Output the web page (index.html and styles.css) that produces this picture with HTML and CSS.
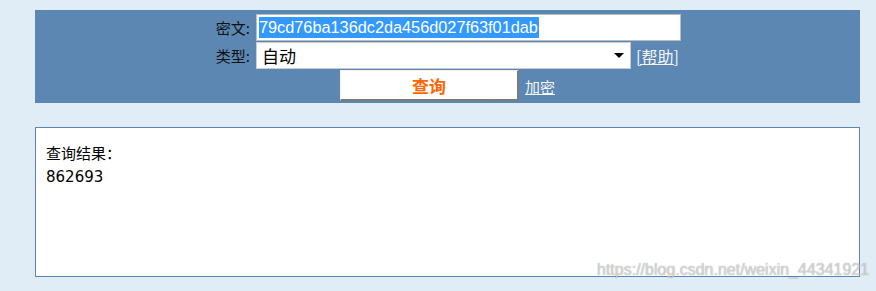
FILE: index.html
```html
<!DOCTYPE html>
<html lang="zh">
<head>
<meta charset="utf-8">
<title>MD5 查询</title>
<link rel="stylesheet" href="styles.css">
</head>
<body>
<div class="page">
  <form class="bar">
    <label class="lbl">密文:</label>
    <div class="field">
      <div class="text-input"><span class="sel">79cd76ba136dc2da456d027f63f01dab</span></div>
    </div>
    <label class="lbl">类型:</label>
    <div class="field row">
      <div class="select"><span>自动</span><i class="caret"></i></div>
      <a class="link help" href="#">[帮助]</a>
    </div>
    <div></div>
    <div class="field row">
      <button type="button" class="btn">查询</button>
      <a class="link enc" href="#">加密</a>
    </div>
  </form>
  <div class="result">
    <div class="r-title">查询结果：</div>
    <div class="r-value">862693</div>
  </div>
</div>
<div class="watermark">https://blog.csdn.net/weixin_44341921</div>
</body>
</html>
```
FILE: styles.css
```css
html, body {
  margin: 0;
  padding: 0;
  background: #e1edf6;
  font-family: "Noto Sans CJK SC", "DejaVu Sans", sans-serif;
  height: 100%;
}
.page {
  margin: 10px 0 0 35px;
  width: 825px;
}
.bar {
  background: #5b87b2;
  margin: 0;
  padding: 4px 0 2px 0;
  display: grid;
  grid-template-columns: 215px 1fr;
  column-gap: 6px;
  row-gap: 1px;
  align-items: center;
}
.lbl {
  text-align: right;
  font-size: 15px;
  color: #111;
  line-height: 27px;
}
.field.row {
  display: flex;
  align-items: center;
}
.text-input {
  width: 421px;
  height: 25px;
  background: #fff;
  border: 1px solid #b8bcc4;
  display: flex;
  align-items: center;
  padding-left: 2px;
  box-sizing: content-box;
}
.sel {
  background: #3399ff;
  color: #fff;
  font-family: "Liberation Sans", Arial, sans-serif;
  font-size: 16.3px;
  line-height: 21px;
  height: 21px;
  display: inline-block;
  padding: 0 1px 0 0;
}
.select {
  width: 373px;
  height: 25px;
  border: 1px solid #c8ccd4;
  background: #fff;
  display: flex;
  align-items: center;
  justify-content: space-between;
  font-size: 17px;
  color: #000;
}
.select span {
  padding-left: 5px;
  line-height: 25px;
}
.caret {
  width: 0;
  height: 0;
  border-left: 5px solid transparent;
  border-right: 5px solid transparent;
  border-top: 5px solid #000;
  margin-right: 6px;
}
.link {
  color: #f2f6fb;
  text-decoration: underline;
  font-size: 14px;
}
.help {
  margin-left: 5px;
  font-size: 16px;
}
.btn {
  margin-left: 84px;
  width: 179px;
  height: 31px;
  background: #fff;
  border: 0;
  border-top: 1px solid #f4f4f4;
  border-left: 1px solid #f4f4f4;
  border-right: 2px solid #7a7a7a;
  border-bottom: 2px solid #7a7a7a;
  color: #ff6600;
  font-weight: bold;
  font-size: 17px;
  font-family: "Noto Sans CJK SC", sans-serif;
  padding: 0;
  line-height: 27px;
}
.enc {
  margin-left: 6px;
  font-size: 15px;
  margin-top: 2px;
}
.result {
  margin-top: 24px;
  background: #fff;
  border: 1px solid #5b87b2;
  padding: 13px 10px 0 10px;
  box-sizing: content-box;
  height: 135px;
  color: #000;
}
.r-title {
  font-size: 15px;
  line-height: 24px;
}
.r-value {
  font-family: "DejaVu Sans", sans-serif;
  font-size: 15px;
  line-height: 24px;
}
.watermark {
  position: absolute;
  left: 597px;
  top: 261px;
  font-family: "Liberation Sans", Arial, sans-serif;
  font-size: 16px;
  color: rgba(255, 255, 255, 0.6);
  text-shadow: 0 0 1px rgba(90, 90, 90, 0.75);
  white-space: nowrap;
}
```
